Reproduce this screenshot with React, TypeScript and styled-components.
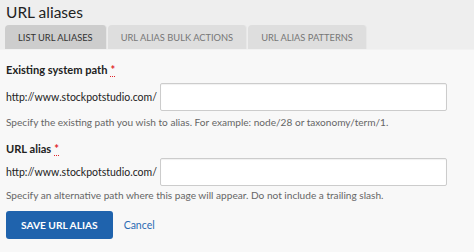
import React, {FC} from "react";
import styled, {createGlobalStyle} from "styled-components";

const GlobalStyle = createGlobalStyle`
  html, body {
    margin: 0;
    padding: 0;
    background: #f8f8f8;
    font-family: Lato, "Open Sans", "Liberation Sans", sans-serif;
  }
`

const PageStyled = styled.div`
  width: 474px;
  height: 252px;
  overflow: hidden;
  background: #f8f8f8;
`

const HeaderStyled = styled.header`
  background: #eeeeee;
  padding: 0 0 0 5px;
  border-bottom: 1px solid #f2f2f2;
`

const TitleStyled = styled.h1`
  margin: 0;
  padding: 0 0 0 1px;
  font-size: 15.5px;
  line-height: 25px;
  font-weight: 400;
  color: #222;
`

const TabsStyled = styled.nav`
  display: flex;
  gap: 1px;
`

const TabStyled = styled.a<{$active?: boolean}>`
  display: block;
  padding: 0 13px;
  height: 24px;
  line-height: 25px;
  font-size: 9.3px;
  text-transform: uppercase;
  border-radius: 4px 4px 0 0;
  background: ${({$active}) => $active ? "#cdcdcd" : "#dedede"};
  color: ${({$active}) => $active ? "#333" : "#777"};
  border-right: 1px solid ${({$active}) => $active ? "#e6e6e6" : "#e8e8e8"};
`

const FormStyled = styled.form`
  padding: 12px 27px 0 6px;
`

const FieldStyled = styled.div<{$tight?: boolean}>`
  label {
    margin-bottom: ${({$tight}) => $tight ? "1px" : "5px"};
  }
  p {
    margin: ${({$tight}) => $tight ? "2px 0 9px" : "4px 0 12px"};
  }
`

const LabelStyled = styled.label`
  display: block;
  font-size: 11.1px;
  font-weight: 700;
  color: #222;
  line-height: 16px;
`

const RequiredStyled = styled.span`
  color: #e0242a;
  margin-left: 3px;
  border-bottom: 1px dotted #e0242a;
`

const RowStyled = styled.div`
  display: flex;
  align-items: center;
  gap: 3px;
`

const PrefixStyled = styled.span`
  font-size: 10.5px;
  color: #222;
  white-space: nowrap;
`

const InputStyled = styled.input`
  flex: 1;
  height: 28px;
  box-sizing: border-box;
  border: 1px solid #cccccc;
  border-radius: 2px;
  background: #fff;
  box-shadow: inset 0 1px 1px rgba(0,0,0,0.06);
`

const HelpStyled = styled.p`
  font-size: 10.1px;
  line-height: 14px;
  color: #666;
`

const ActionsStyled = styled.div`
  display: flex;
  align-items: center;
  gap: 11px;
`

const ButtonStyled = styled.button`
  height: 28px;
  padding: 0 15px;
  border: none;
  border-radius: 3px;
  background: #1f63ad;
  color: #fff;
  font-family: inherit;
  font-weight: 700;
  font-size: 10.2px;
  text-transform: uppercase;
`

const CancelStyled = styled.a`
  font-size: 10.5px;
  color: #2a6bb3;
`

type TField = {
  label: string
  help: string
  tight?: boolean
}

const Field: FC<TField> = ({label, help, tight}) => (
  <FieldStyled $tight={tight}>
    <LabelStyled>{label}<RequiredStyled>*</RequiredStyled></LabelStyled>
    <RowStyled>
      <PrefixStyled>http://www.stockpotstudio.com/</PrefixStyled>
      <InputStyled type="text"/>
    </RowStyled>
    <HelpStyled>{help}</HelpStyled>
  </FieldStyled>
)

const App: FC = () => (
  <PageStyled>
    <GlobalStyle/>
    <HeaderStyled>
      <TitleStyled>URL aliases</TitleStyled>
      <TabsStyled>
        <TabStyled $active>List URL aliases</TabStyled>
        <TabStyled>URL alias bulk actions</TabStyled>
        <TabStyled>URL alias patterns</TabStyled>
      </TabsStyled>
    </HeaderStyled>
    <FormStyled>
      <Field
        label="Existing system path"
        help="Specify the existing path you wish to alias. For example: node/28 or taxonomy/term/1."
      />
      <Field
        tight
        label="URL alias"
        help="Specify an alternative path where this page will appear. Do not include a trailing slash."
      />
      <ActionsStyled>
        <ButtonStyled type="button">Save URL alias</ButtonStyled>
        <CancelStyled>Cancel</CancelStyled>
      </ActionsStyled>
    </FormStyled>
  </PageStyled>
)

export default App
